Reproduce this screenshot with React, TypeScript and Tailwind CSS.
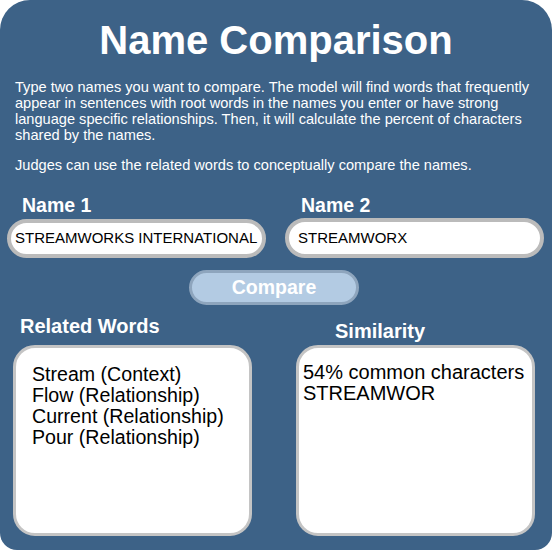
export default function App() {
  return (
    <div className="w-[552px] h-[552px] bg-white font-['Liberation_Sans',Arial,sans-serif]">
      <div className="w-[552px] h-[550px] bg-[#3d6287] rounded-tl-[30px] rounded-tr-[30px] rounded-b-[17px] flex flex-col text-white">
        <h1 className="mt-[17px] text-center text-[40px] font-bold leading-[46px]">Name Comparison</h1>

        <div className="mt-[16px] px-[15px] text-[14.6px] leading-[16px]">
          <p>
            Type two names you want to compare. The model will find words that frequently appear in
            sentences with root words in the names you enter or have strong language specific
            relationships. Then, it will calculate the percent of characters shared by the names.
          </p>
          <p className="mt-[14px]">Judges can use the related words to conceptually compare the names.</p>
        </div>

        <div className="mt-[21px] pl-[7px] grid grid-cols-[259px_259px] gap-x-[19px]">
          <div className="flex flex-col">
            <label className="pl-[15px] text-[19.5px] font-bold leading-[22px]">Name 1</label>
            <div className="mt-[3px] h-[39px] rounded-full border-4 border-[#bbbbbb] bg-white flex items-center pl-[4px] text-[15px] text-black whitespace-nowrap overflow-hidden">
              STREAMWORKS INTERNATIONAL
            </div>
          </div>
          <div className="flex flex-col">
            <label className="pl-[16px] text-[19.5px] font-bold leading-[22px]">Name 2</label>
            <div className="mt-[2px] h-[40px] rounded-full border-4 border-[#bbbbbb] bg-white flex items-center pl-[9px] text-[15px] text-black">
              STREAMWORX
            </div>
          </div>
        </div>

        <div className="mt-[12px] flex justify-center pr-[4px]">
          <button className="w-[170px] h-[35px] rounded-full border-[3px] border-[#8ea5bd] bg-[#b3cbe3] text-white text-[19.5px] font-bold leading-none">
            Compare
          </button>
        </div>

        <div className="pl-[13px] grid grid-cols-[239px_239px] gap-x-[44px]">
          <div className="flex flex-col">
            <h2 className="mt-[10px] pl-[7px] text-[20px] font-bold leading-[22px]">Related Words</h2>
            <div className="mt-[8px] h-[191px] rounded-[22px] border-[3px] border-[#c4c4c4] bg-white pt-[16px] pl-[16px] text-[19.6px] leading-[21px] text-black">
              <div>Stream (Context)</div>
              <div>Flow (Relationship)</div>
              <div>Current (Relationship)</div>
              <div>Pour (Relationship)</div>
            </div>
          </div>
          <div className="flex flex-col">
            <h2 className="mt-[15px] pl-[39px] text-[20px] font-bold leading-[22px]">Similarity</h2>
            <div className="mt-[3px] h-[191px] rounded-[22px] border-[3px] border-[#c4c4c4] bg-white pt-[14px] pl-[4px] text-[20px] leading-[21px] text-black">
              <div>54% common characters</div>
              <div>STREAMWOR</div>
            </div>
          </div>
        </div>
      </div>
    </div>
  );
}
